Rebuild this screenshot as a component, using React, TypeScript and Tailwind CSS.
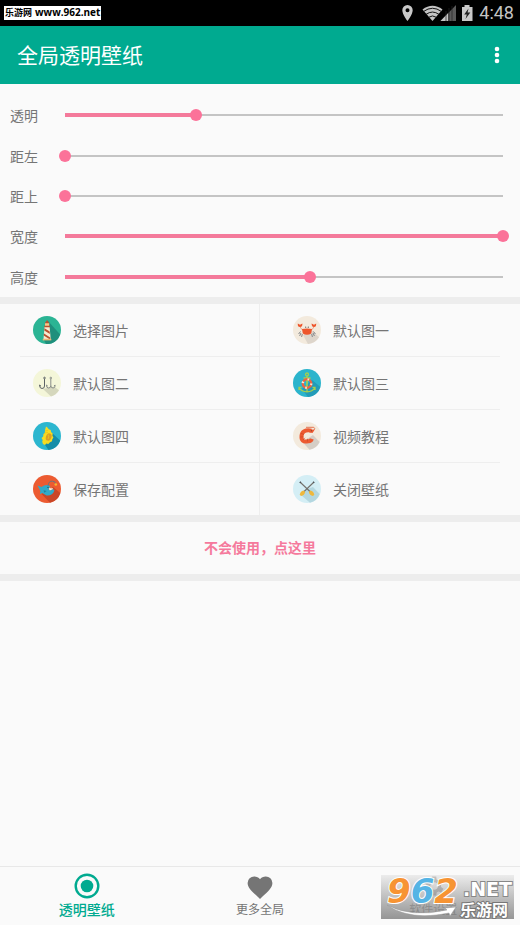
import { useState } from "react";
import type { CSSProperties, ReactNode } from "react";

const settings = [
  { id: "opacity", label: "透明", value: 30 },
  { id: "left", label: "距左", value: 0 },
  { id: "top", label: "距上", value: 0 },
  { id: "width", label: "宽度", value: 100 },
  { id: "height", label: "高度", value: 56 },
];

function SliderRow({ id, label, initial }: { id: string; label: string; initial: number }) {
  const [value, setValue] = useState(initial);
  const fill: CSSProperties = {
    backgroundSize: `calc((100% - 12px) * ${value / 100}) 4px, calc(100% - 12px) 2px`,
  };
  return (
    <div className="flex items-center pl-[10px] pr-[11px]">
      <label htmlFor={id} className="w-[49px] shrink-0 text-sm text-[#757575]">
        {label}
      </label>
      <input
        id={id}
        type="range"
        min={0}
        max={100}
        value={value}
        onChange={(e) => setValue(Number(e.target.value))}
        style={fill}
        className="h-3 min-w-0 flex-1 appearance-none bg-[linear-gradient(#f47a9b,#f47a9b),linear-gradient(#c4c4c4,#c4c4c4)] bg-[position:6px_center] bg-no-repeat outline-none [&::-webkit-slider-thumb]:size-3 [&::-webkit-slider-thumb]:appearance-none [&::-webkit-slider-thumb]:rounded-full [&::-webkit-slider-thumb]:bg-[#fb7299]"
      />
    </div>
  );
}

function Disc({ color, shadow, shade, children }: { color: string; shadow: string; shade: string; children: ReactNode }) {
  return (
    <svg viewBox="0 0 28 28" className="size-7 shrink-0" aria-hidden="true">
      <circle cx="14" cy="14" r="14" fill={color} />
      <path d={shadow} fill={shade} />
      {children}
    </svg>
  );
}

const Lighthouse = () => (
  <Disc color="#2bb494" shade="#1f8f7c" shadow="M15 5 L27.2 18.5 A14 14 0 0 1 13 28 L11 24Z">
    <path d="M11.6 10.5h5l1.2 13.5H10.4z" fill="#f7ead0" />
    <path d="M11.5 12.2l5.2 3.4.2 2.3-5.6-3.4zM11 17.4l6.2 4 .2 2.3-6.7-4.2z" fill="#b9512f" />
    <path d="M12 7h4.2v3.5H12z" fill="#f4c98a" />
    <path d="M11.8 7.2L14.1 4l2.3 3.2zM11.2 9.8h5.8v1.4h-5.8z" fill="#b9512f" />
    <path d="M9.8 22.8h8.5V24.4H9.8z" fill="#e9b878" />
  </Disc>
);

const Crab = () => (
  <Disc color="#f3eadd" shade="#ddd5cb" shadow="M18.5 14 L26 21.3 A14 14 0 0 1 15 28 L10 19Z">
    <path d="M7.5 15.5L5.6 18M8 17l-1.4 3M9.3 18l-.7 3M20.500 15.500L22.400 18M20 17l1.400 3M18.700 18l.7 3" fill="none" stroke="#777c80" strokeWidth=".9" />
    <path d="M7 10.500Q7.500 13 10.200 14M21 10.500Q20.500 13 17.800 14" fill="none" stroke="#f0a184" strokeWidth="1" />
    <path d="M4.800 7.500l2.200 1.300L9.400 7.500Q9.600 11 7 11T4.800 7.500zM18.600 7.500l2.400 1.300 2.200-1.300Q23.400 11 21 11t-2.400-3.500zM9 13Q14 12 19 13L18.200 17.500Q14 20 9.800 17.500z" fill="#ee562c" />
    <circle cx="12.700" cy="11.200" r=".6" fill="#555" />
    <circle cx="15.300" cy="11.200" r=".6" fill="#555" />
  </Disc>
);

const Hooks = () => (
  <Disc color="#f4f6d9" shade="#d5d7bd" shadow="M18 18 L22.300 18.500 L26 21.300 A14 14 0 0 1 18 27.500 L10 20Z">
    <g fill="none" stroke="#5c6265" strokeWidth="1">
      <circle cx="11.500" cy="9" r=".8" />
      <path d="M11.500 10v7Q11.500 19.500 9 19.500T6.500 16l1.500 1.200" />
    </g>
    <g fill="none" stroke="#898e89" strokeWidth="1">
      <circle cx="17.800" cy="9" r=".8" />
      <path d="M17.800 10v6.500Q17.800 19 15.500 19T13.500 16l1.200 1M17.800 16.500q0 2.500 2.300 2.500t2-3l-1.200 1" />
    </g>
  </Disc>
);

const AnchorBuoy = () => (
  <Disc color="#2bb4cc" shade="#239bb8" shadow="M19 11 L27.400 18 A14 14 0 0 1 15 28 L9 20Z">
    <g fill="none" stroke="#a5cf4e" strokeWidth="1.300">
      <circle cx="14" cy="5.500" r="1.500" />
      <path d="M14 7v16M10.500 9h7M6 18.500q2.500 4.300 8 4.300t8-4.300M6 21v-2.700h2.500M22 21v-2.700h-2.500" />
    </g>
    <circle cx="14" cy="14.500" r="4.200" fill="none" stroke="#ec6443" strokeWidth="2.400" />
    <circle cx="14" cy="14.500" r="4.200" fill="none" stroke="#f5ead2" strokeWidth="2.400" strokeDasharray="1.600 5" />
    <path d="M14 11v7" stroke="#a5cf4e" strokeWidth="1" />
  </Disc>
);

const Shell = () => (
  <Disc color="#2cb6cf" shade="#168da8" shadow="M18 10 L27.200 18.500 A14 14 0 0 1 15.500 28 L10 20Z">
    <path d="M13 4.500l1.700 1.200 1 1.600 2 .7.400 2 1.600 1.500-.3 2.200 1 1.800-1.100 1.800-.3 2-2 1-1.700 1.600-2-.3L12 23l-2-1-.8-2.200.5-1.800-1.200-2 1.700-1.500.200-2.300 1.500-1.800.1-2.400z" fill="#f6dc22" />
    <ellipse cx="15.700" cy="15" rx="2.800" ry="3.800" fill="#df9e25" transform="rotate(18 15.700 15)" />
    <path d="M11 12q1.500-1.800 4-1.500M12 9l3-.5M15 12.500q1.500 2.300 0 4.500" fill="none" stroke="#ecc51c" strokeWidth=".9" />
  </Disc>
);

const Shrimp = () => (
  <Disc color="#f3eadd" shade="#d5cec6" shadow="M20 13 L26.700 20 A14 14 0 0 1 16.500 27.700 L9.500 20Z">
    <path d="M18.500 8.600Q9 7 8.500 14T15 19.200q3 .2 3.800-2.400" fill="none" stroke="#ec5a31" strokeWidth="4" />
    <path d="M13 5.300h7.800q1.700.8.200 2.700" fill="none" stroke="#e37553" strokeWidth="1" />
    <path d="M17 7.500l4.700.3-2.200 3.100-3.500-.6z" fill="#ec5a31" />
    <path d="M8 11.300l3 1.200M7.300 15l3.200-.2M10 18l2-2.200M14.500 19.500v-2.700" stroke="#c84526" strokeWidth=".6" />
    <circle cx="18.300" cy="8.800" r=".5" fill="#53342a" />
  </Disc>
);

const AnglerFish = () => (
  <Disc color="#ec5b31" shade="#c94627" shadow="M20 12 L27.300 18 A14 14 0 0 1 17 27.700 L8.500 19Z">
    <path d="M4.500 10.500l4 1.600Q13 8.500 17.300 11.200l-1.700 3 1.500 1.200 3-1.500 1.300 1.600Q19.500 21 13.500 20.500L9.200 18l-2.400 1.200.6-3.200z" fill="#31aac8" />
    <path d="M15 11Q15.500 5.700 19.500 6.200q3.200.3 3 2.500" fill="none" stroke="#597a89" strokeWidth=".9" />
    <circle cx="22.800" cy="9.500" r="1.300" fill="#f6b52d" />
    <path d="M16 14.300l.4-1.700.9 1 .8-1.200.5 1.200 1.400-.7-.4 1.300-2.700 1.300z" fill="#fff1de" />
    <circle cx="15" cy="12.300" r=".6" fill="#163e50" />
    <path d="M10.500 15.200l3.100.8-2.300 1.800z" fill="#20839e" />
  </Disc>
);

const Paddles = () => (
  <Disc color="#d4eef5" shade="#b4d7e0" shadow="M20 12 L26.700 19 A14 14 0 0 1 17 27.700 L8 20 L14 14Z">
    <path d="M7.500 7.500L18.500 18M20.500 7.500L9.500 18" stroke="#74716c" strokeWidth="1.100" />
    <path d="M6.700 7.900l1.200-1.200M21.300 7.900l-1.200-1.200" stroke="#45484c" strokeWidth="1.300" />
    <path d="M10.700 15.500l1.500 1.600Q11.500 20.500 8 21l-1.300-1.300Q7.500 16 10.700 15.500zM17.300 15.500l-1.500 1.600Q16.500 20.500 20 21l1.300-1.300Q20.500 16 17.300 15.500z" fill="#efb83d" />
  </Disc>
);

const actions = [
  { label: "选择图片", Icon: Lighthouse },
  { label: "默认图一", Icon: Crab },
  { label: "默认图二", Icon: Hooks },
  { label: "默认图三", Icon: AnchorBuoy },
  { label: "默认图四", Icon: Shell },
  { label: "视频教程", Icon: Shrimp },
  { label: "保存配置", Icon: AnglerFish },
  { label: "关闭壁纸", Icon: Paddles },
];

function StatusIcons() {
  return (
    <svg viewBox="0 0 72 18" className="h-[18px] w-[72px]" aria-hidden="true">
      <path fillRule="evenodd" d="M5.500 1A5.200 5.200 0 0 0 .3 6.200C.3 10.200 5.500 17 5.500 17s5.200-6.800 5.200-10.800A5.200 5.200 0 0 0 5.500 1zm0 3.200a2 2 0 1 1 0 4 2 2 0 0 1 0-4z" fill="#c9c9c9" />
      <path d="M20.500 5.500Q30.500-2 40.500 5.500L30.500 17z" fill="#c4c4c4" />
      <path d="M21.500 7.500q9-6.500 18 0M24 10.400q6.500-4.700 13 0M26.600 13.300q3.900-2.700 7.800 0" fill="none" stroke="#111" strokeWidth="1" />
      <path d="M38.500 17L54 1v16z" fill="#5a5a5a" />
      <path d="M38.500 17L46 9.300V17z" fill="#c4c4c4" />
      <path d="M44 7v10M47 4v13M50 2v15" stroke="#222" strokeWidth=".7" />
      <path d="M60 3h2.500V1h5v2H70.500v14H60z" fill="#c9c9c9" />
      <path d="M66.500 4.500l-4.300 6h2.600l-1.300 4.500 4.800-6.400h-2.700z" fill="#222" />
    </svg>
  );
}

function StatusBar() {
  return (
    <div className="flex h-[26px] items-center justify-between bg-black pr-[6px] pb-px pl-1">
      <span className="flex h-[14px] items-center gap-[3px] whitespace-nowrap bg-white px-px font-['Open_Sans','Noto_Sans_CJK_SC',sans-serif] text-[10px] font-bold text-black">
        <span className="text-[9px]">乐游网</span>
        <span>www.962.net</span>
      </span>
      <div className="flex items-center gap-[5px]">
        <StatusIcons />
        <span className="font-[Roboto,sans-serif] text-lg leading-6 text-[#c4c4c4]">4:48</span>
      </div>
    </div>
  );
}

function Watermark() {
  return (
    <div className="pointer-events-none absolute right-[6px] bottom-[6px] h-11 w-[133px] bg-linear-to-b from-[#e6e6e6]/70 to-[#7c7c7c]/80">
      <span className="absolute -top-[4px] left-[6px] font-['DejaVu_Sans',sans-serif] text-[34px] leading-[40px] font-bold text-[#f79433] italic [paint-order:stroke_fill] [-webkit-text-stroke:2px_#ffffff]">
        9<span className="text-[#55b4e5]">6</span>2
      </span>
      <span className="absolute top-[4px] right-[2px] font-['DejaVu_Sans',sans-serif] text-[19px] leading-5 font-bold text-white [paint-order:stroke_fill] [-webkit-text-stroke:2px_#888888]">
        .NET
      </span>
      <span className="absolute right-[6px] bottom-0 text-base leading-5 font-bold text-white [paint-order:stroke_fill] [-webkit-text-stroke:2px_#777777]">
        乐游网
      </span>
      <svg viewBox="0 0 133 44" className="absolute inset-0 size-full" aria-hidden="true">
        <path d="M6 30Q30 43 66 35l-2-2 11-1-6 9-1-3Q29 46 6 30z" fill="#fff" stroke="#999" strokeWidth=".5" />
      </svg>
    </div>
  );
}

export default function App() {
  return (
    <div className="relative flex min-h-screen flex-col bg-[#fafafa] font-['Noto_Sans_CJK_SC',sans-serif]">
      <StatusBar />
      <header className="flex h-[58px] items-center justify-between bg-[#00aa90] pr-[11px] pl-[17px]">
        <h1 className="pb-[2px] text-[21px] leading-7 text-white">全局透明壁纸</h1>
        <button type="button" aria-label="更多选项" className="flex h-8 w-6 items-center justify-center">
          <svg viewBox="0 0 6 18" className="h-[18px] w-[6px]" fill="#fff" aria-hidden="true">
            <circle cx="3" cy="3" r="2.300" />
            <circle cx="3" cy="9" r="2.300" />
            <circle cx="3" cy="15" r="2.300" />
          </svg>
        </button>
      </header>

      <main>
        <section className="grid h-[213px] auto-rows-fr pt-[11px]">
          {settings.map((s) => (
            <SliderRow key={s.id} id={s.id} label={s.label} initial={s.value} />
          ))}
        </section>

        <section className="border-y-[7px] border-[#ededed] px-5">
          <div className="grid grid-cols-2">
            {actions.map(({ label, Icon }, i) => (
              <button
                key={label}
                type="button"
                className={`flex items-center gap-3 border-[#eeeeee] text-sm text-[#757575] ${
                  i % 2 === 0 ? "border-r pl-[13px]" : "pl-[33px]"
                } ${i < 6 ? "h-[53px] border-b" : "h-[52px]"}`}
              >
                <Icon />
                <span className="pb-px">{label}</span>
              </button>
            ))}
          </div>
        </section>

        <button
          type="button"
          className="block h-[59px] w-full border-b-[7px] border-[#ededed] pb-[2px] text-sm font-bold text-[#f5799c]"
        >
          不会使用，点这里
        </button>
      </main>

      <nav className="mt-auto grid h-[59px] grid-cols-3 border-t border-[#e8e8e8]">
        <button type="button" aria-current="page" className="flex flex-col items-center pt-[6px] text-[#00aa90]">
          <svg viewBox="0 0 26 26" className="size-[26px]" aria-hidden="true">
            <circle cx="13" cy="13" r="11.300" fill="none" stroke="currentColor" strokeWidth="2.400" />
            <circle cx="13" cy="13" r="6.300" fill="currentColor" />
          </svg>
          <span className="text-sm leading-5 font-medium">透明壁纸</span>
        </button>
        <button type="button" className="flex flex-col items-center pt-[6px] text-[#757575]">
          <svg viewBox="0 0 26 26" className="size-[26px]" fill="currentColor" aria-hidden="true">
            <path d="M13 26L11 24C5 18.500.6 14.700.6 10A6.600 6.600 0 0 1 7.300 3.500C9.600 3.500 11.700 4.500 13 6.200c1.300-1.700 3.400-2.700 5.700-2.700a6.600 6.600 0 0 1 6.700 6.500c0 4.700-4.400 8.500-10.400 14z" />
          </svg>
          <span className="text-xs leading-5">更多全局</span>
        </button>
        <button type="button" className="flex flex-col items-center pt-[6px] text-[#757575]">
          <svg viewBox="0 0 24 24" className="size-[26px]" fill="currentColor" aria-hidden="true">
            <path fillRule="evenodd" d="M19.400 13a7.500 7.500 0 0 0 0-2l2.100-1.600-2-3.500-2.500 1a7 7 0 0 0-1.700-1L15 3.300h-4l-.6 2.600a7 7 0 0 0-1.700 1l-2.500-1-2 3.500L6.300 11a7.500 7.500 0 0 0 0 2l-2.100 1.600 2 3.500 2.500-1a7 7 0 0 0 1.700 1l.6 2.600h4l.4-2.600a7 7 0 0 0 1.700-1l2.500 1 2-3.500zM13 15.500a3.500 3.500 0 1 1 0-7 3.500 3.500 0 0 1 0 7z" />
          </svg>
          <span className="text-xs leading-5">软件设置</span>
        </button>
      </nav>
      <Watermark />
    </div>
  );
}
